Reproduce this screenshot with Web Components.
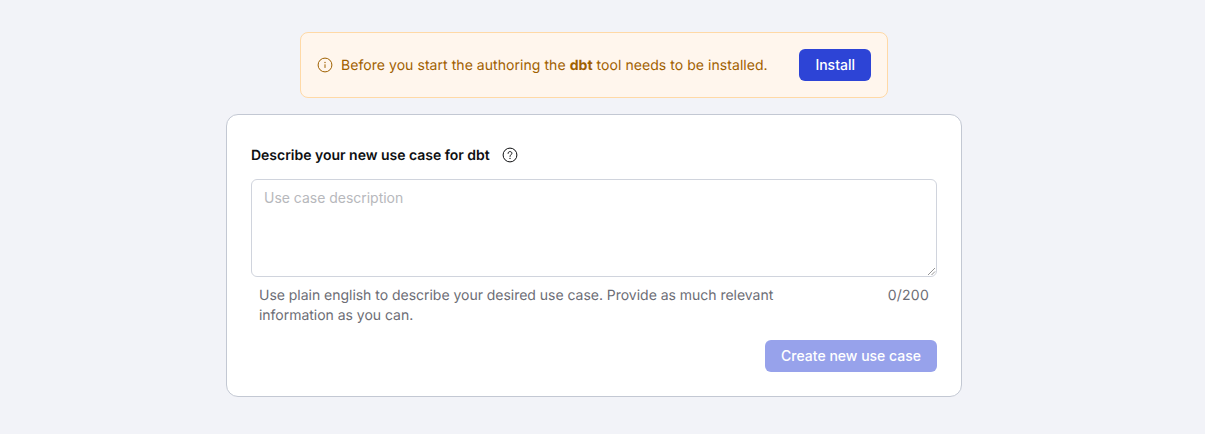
<!DOCTYPE html>
<html lang="en">
<head>
<meta charset="utf-8">
<title>New use case</title>
<style>
html,body{margin:0;height:100%;background:#f2f3f8}
body{font:400 14px/20px Inter,"Liberation Sans",sans-serif;color:#0e0f11;overflow:hidden;text-rendering:geometricPrecision}
</style>
</head>
<body>
<use-case-page>
  <notice-bar>Before you start the authoring the <b>dbt</b> tool needs to be installed.<action-button slot="action">Install</action-button></notice-bar>
  <use-case-form heading="Describe your new use case for dbt" placeholder="Use case description" count="0/200">
    <span slot="hint">Use plain english to describe your desired use case. Provide as much relevant information as you can.</span>
    <action-button slot="action" disabled>Create new use case</action-button>
  </use-case-form>
</use-case-page>
<script>
const define = (name, html, setup) => customElements.define(name, class extends HTMLElement {
  constructor() {
    super();
    this.attachShadow({mode: "open"}).innerHTML = html;
  }
  connectedCallback() { if (setup) setup(this, this.shadowRoot); }
});

define("use-case-page", `<style>
:host{display:flex;flex-direction:column;align-items:center;gap:16px;box-sizing:border-box;width:calc(100% - 17px);padding-top:32px}
</style><slot></slot>`);

define("action-button", `<style>
:host{display:block;flex:none}
button{display:block;box-sizing:border-box;height:32px;padding:0 16px;border:0;border-radius:6px;background:#2d44d6;color:#fff;font:450 14px/32px Inter,"Liberation Sans",sans-serif;letter-spacing:0;white-space:nowrap}
:host([disabled]) button{background:#97a2eb}
</style><button><slot></slot></button>`, (host, root) => {
  root.querySelector("button").disabled = host.hasAttribute("disabled");
});

define("notice-bar", `<style>
:host{display:flex;align-items:center;box-sizing:border-box;width:588px;height:66px;padding:0 16px;border:1px solid #ffd9a6;border-radius:8px;background:#fff6ed;color:#9f6000}
svg{flex:none;width:16px;height:16px;margin-right:8px}
p{margin:0;padding-top:2px;flex:1;white-space:nowrap;letter-spacing:.055px}
::slotted(b){font-weight:700}
</style>
<svg viewBox="0 0 16 16" fill="none" stroke="currentColor"><circle cx="8" cy="8" r="6.9"/><path d="M8 7.3v3.6"/><circle cx="8" cy="5.5" r=".7" fill="currentColor" stroke="none"/></svg>
<p><slot></slot></p><slot name="action"></slot>`);

define("use-case-form", `<style>
:host{display:block;box-sizing:border-box;width:736px;height:283px;padding:30px 24px 24px;border:1px solid #c3c8d3;border-radius:12px;background:#fff}
header{display:flex;align-items:center;height:20px;gap:12px}
h1{margin:0;padding-top:2px;width:239px;white-space:nowrap;font-size:14px;line-height:20px;font-weight:600;letter-spacing:-.015px}
svg{width:16px;height:16px}
textarea{display:block;box-sizing:border-box;width:100%;height:98px;margin:14px 0 0;padding:8px 12px;border:1px solid #d0d4dd;border-radius:6px;background:#fff;font:inherit;letter-spacing:-.02px;resize:vertical;outline:0}
textarea::placeholder{color:#b7b8bc;opacity:1}
textarea::-webkit-resizer{background:url("data:image/svg+xml,%3Csvg xmlns='http://www.w3.org/2000/svg' width='15' height='15'%3E%3Cpath d='M7 14l7-7M10.5 14l3.5-3.5' stroke='%23888' stroke-width='.9'/%3E%3C/svg%3E") right bottom no-repeat}
.help{display:flex;justify-content:space-between;padding:9px 8px 0;color:#6c6d75}
.help div{width:540px;letter-spacing:-.025px}
.count{letter-spacing:.25px}
footer{display:flex;justify-content:flex-end;margin-top:14px}
</style>
<header><h1></h1><svg viewBox="0 0 16 16" fill="none" stroke="currentColor"><circle cx="8" cy="8" r="6.9"/><path d="M6.1 6.4C6.1 5.2 6.9 4.6 8 4.6s1.9.7 1.9 1.7c0 1.3-1.9 1.5-1.9 3.1" stroke-linecap="round"/><circle cx="8" cy="11.4" r=".65" fill="currentColor" stroke="none"/></svg></header>
<textarea></textarea>
<div class="help"><div><slot name="hint"></slot></div><span class="count"></span></div>
<footer><slot name="action"></slot></footer>`, (host, root) => {
  root.querySelector("h1").textContent = host.getAttribute("heading");
  root.querySelector("textarea").placeholder = host.getAttribute("placeholder");
  root.querySelector(".count").textContent = host.getAttribute("count");
});
</script>
</body>
</html>
